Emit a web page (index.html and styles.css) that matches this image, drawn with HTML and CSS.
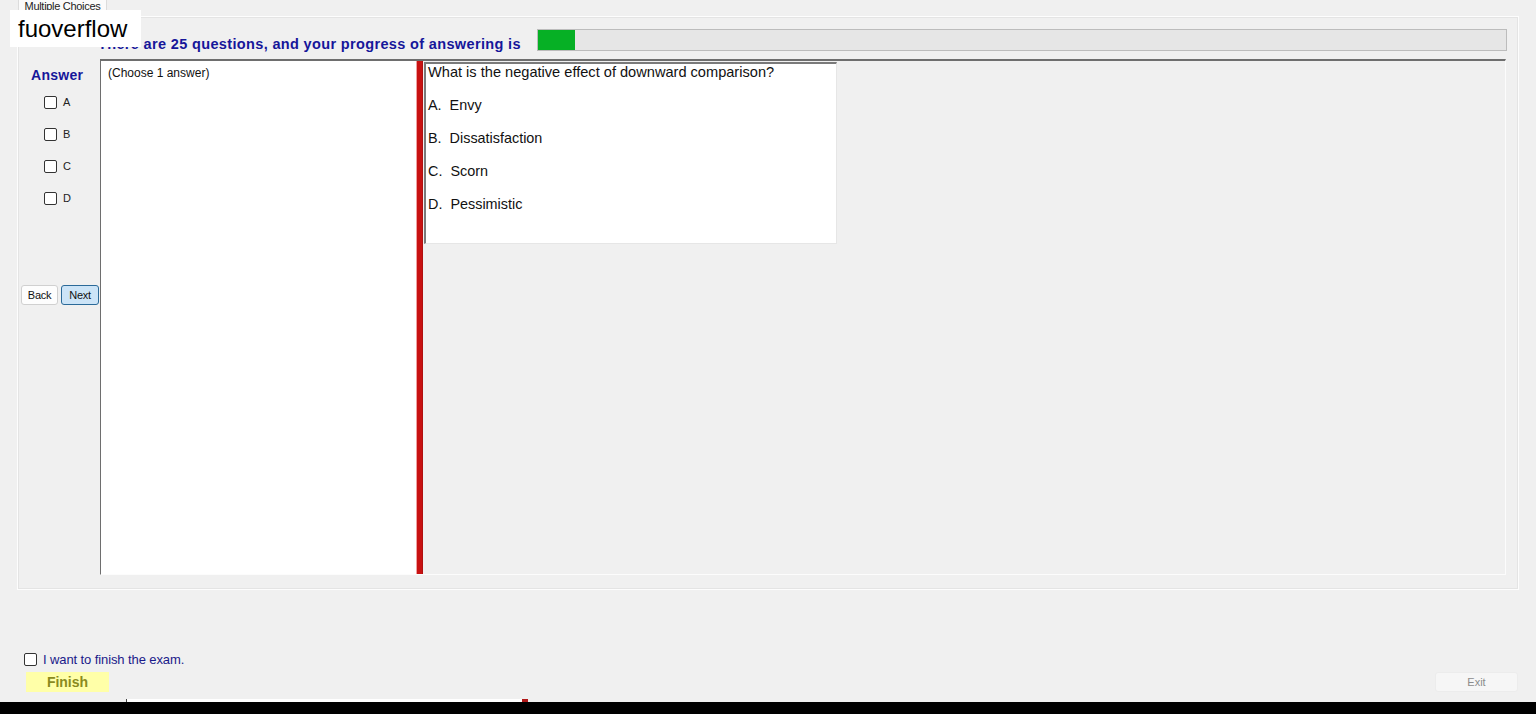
FILE: index.html
```html
<!DOCTYPE html>
<html lang="en">
<head>
    <meta charset="UTF-8">
    <title>Multiple Choices</title>
    <link rel="stylesheet" href="styles.css">
</head>
<body>
    <div class="watermark">fuoverflow</div>

    <div class="tabstrip">
        <span class="tab">Multiple Choices</span>
    </div>

    <div class="page">
        <div class="top-row">
            <h1 class="progress-title">There are 25 questions, and your progress of answering is</h1>
            <div class="progress"><div class="progress-fill" style="width: 37px"></div></div>
        </div>

        <div class="main-row">
            <aside class="answer-col">
                <div class="answer-title">Answer</div>
                <ul class="choices">
                    <li><span class="box"></span>A</li>
                    <li><span class="box"></span>B</li>
                    <li><span class="box"></span>C</li>
                    <li><span class="box"></span>D</li>
                </ul>
                <div class="nav">
                    <button class="btn">Back</button>
                    <button class="btn btn-active">Next</button>
                </div>
            </aside>

            <section class="panel">
                <div class="hint-box">(Choose 1 answer)</div>
                <div class="splitter"></div>
                <div class="question-area">
                    <div class="question-box">
                        <p class="question">What is the negative effect of downward comparison?</p>
                        <p class="option">A.&nbsp; Envy</p>
                        <p class="option">B.&nbsp; Dissatisfaction</p>
                        <p class="option">C.&nbsp; Scorn</p>
                        <p class="option">D.&nbsp; Pessimistic</p>
                    </div>
                </div>
            </section>
        </div>
    </div>

    <div class="footer">
        <label class="finish-check"><span class="box"></span>I want to finish the exam.</label>
        <div class="footer-buttons">
            <button class="finish-btn">Finish</button>
            <button class="exit-btn">Exit</button>
        </div>
        <div class="strip"><span class="strip-mark"></span></div>
    </div>

    <div class="taskbar"></div>
</body>
</html>
```

FILE: styles.css
```css
* {
    box-sizing: border-box;
}
html, body {
    margin: 0;
    padding: 0;
}
body {
    width: 1536px;
    height: 714px;
    overflow: hidden;
    background: #f0f0f0;
    font-family: "Liberation Sans", Arial, sans-serif;
    color: #000;
    display: flex;
    flex-direction: column;
    position: relative;
}

/* watermark sitting over the heading */
.watermark {
    position: absolute;
    left: 10px;
    top: 10px;
    width: 131px;
    height: 37px;
    background: #fff;
    font-size: 24px;
    line-height: 37px;
    padding-left: 8px;
    color: #000;
    z-index: 2;
}

.tabstrip {
    height: 16px;
    padding-left: 18px;
}
.tab {
    display: inline-block;
    width: 89px;
    height: 17px;
    background: #fbfbfb;
    border: 1px solid #dcdcdc;
    border-top: none;
    border-bottom: none;
    font-size: 11px;
    line-height: 12px;
    text-align: center;
    color: #222;
    letter-spacing: -0.3px;
    overflow: hidden;
}

.page {
    margin-left: 17px;
    width: 1502px;
    height: 574px;
    border: 1px solid #fdfdfd;
    box-shadow: inset 0 0 0 1px #e4e4e4;
    display: flex;
    flex-direction: column;
}

.top-row {
    height: 42px;
    display: flex;
    align-items: flex-start;
    padding: 0 11px 0 80px;
}
.progress-title {
    margin: 19px 0 0 0;
    font-size: 14.5px;
    line-height: 16px;
    font-weight: bold;
    color: #16169a;
    letter-spacing: 0.35px;
    white-space: nowrap;
}
.progress {
    flex: 1;
    margin: 12px 0 0 16px;
    height: 22px;
    background: #e6e6e6;
    border: 1px solid #bcbcbc;
}
.progress-fill {
    height: 100%;
    background: #06b025;
}

.main-row {
    display: flex;
    height: 516px;
}

.answer-col {
    width: 82px;
    display: flex;
    flex-direction: column;
}
.answer-title {
    margin-top: 8px;
    padding-left: 13px;
    font-size: 14px;
    line-height: 16px;
    font-weight: bold;
    color: #16169a;
    letter-spacing: 0.3px;
}
.choices {
    list-style: none;
    margin: 3px 0 0 0;
    padding: 0 0 0 26px;
}
.choices li {
    height: 32px;
    display: flex;
    align-items: center;
    font-size: 11px;
    color: #222;
}
.box {
    display: inline-block;
    width: 13px;
    height: 13px;
    border: 1px solid #333;
    border-radius: 2px;
    background: #fff;
    margin-right: 6px;
}
.nav {
    margin-top: 71px;
    display: flex;
    gap: 3px;
    padding-left: 3px;
}
.btn {
    height: 20px;
    padding: 0;
    font-family: "Liberation Sans", Arial, sans-serif;
    font-size: 11px;
    color: #111;
    background: #fdfdfd;
    border: 1px solid #d0d0d0;
    border-radius: 3px;
    width: 37px;
    letter-spacing: -0.3px;
}
.btn-active {
    width: 38px;
    background: #cce4f7;
    border-color: #2b6a99;
}

.panel {
    width: 1406px;
    display: flex;
    border-top: 2px solid #6e6e6e;
    border-left: 1px solid #6e6e6e;
    border-right: 1px solid #fcfcfc;
    border-bottom: 1px solid #fcfcfc;
}
.hint-box {
    width: 315px;
    background: #fff;
    font-size: 12px;
    padding: 5px 0 0 7px;
    color: #111;
}
.splitter {
    width: 7px;
    background: #c81212;
    border-left: 1px solid #f0a0a0;
    border-right: 1px solid #b01010;
}
.question-area {
    flex: 1;
    background: #f0f0f0;
    padding: 1px 0 0 1px;
}
.question-box {
    width: 413px;
    height: 182px;
    background: #fff;
    border-top: 2px solid #7a7a7a;
    border-left: 2px solid #7a7a7a;
    border-right: 1px solid #e6e6e6;
    border-bottom: 1px solid #e6e6e6;
    padding: 0 0 0 2px;
}
.question-box p {
    margin: 0;
    font-size: 14.6px;
    line-height: 16px;
    color: #111;
}
.question-box .option {
    margin-top: 17px;
    font-size: 14.4px;
}

.footer {
    flex: 1;
    display: flex;
    flex-direction: column;
    padding-top: 62px;
}
.finish-check {
    display: flex;
    align-items: center;
    height: 15px;
    padding-left: 24px;
    font-size: 13px;
    color: #1a1a8a;
    letter-spacing: -0.1px;
}
.finish-check .box {
    margin-right: 6px;
}
.footer-buttons {
    margin-top: 5px;
    display: flex;
    justify-content: space-between;
    padding: 0 18px 0 26px;
}
.finish-btn {
    width: 83px;
    height: 20px;
    padding: 0;
    border: none;
    background: #ffffa8;
    color: #8a8a1e;
    font-family: "Liberation Sans", Arial, sans-serif;
    font-size: 14px;
    font-weight: bold;
}
.exit-btn {
    width: 83px;
    height: 20px;
    padding: 0;
    border: 1px solid #ececec;
    border-radius: 3px;
    background: #f6f6f6;
    color: #8c8c8c;
    font-family: "Liberation Sans", Arial, sans-serif;
    font-size: 11px;
}
.strip {
    margin-top: auto;
    margin-left: 126px;
    width: 402px;
    height: 3px;
    background: #fff;
    border-left: 1px solid #444;
    position: relative;
}
.strip-mark {
    position: absolute;
    right: 0;
    top: 0;
    width: 6px;
    height: 3px;
    background: #b01818;
}

.taskbar {
    height: 12px;
    background: #000;
}
```
